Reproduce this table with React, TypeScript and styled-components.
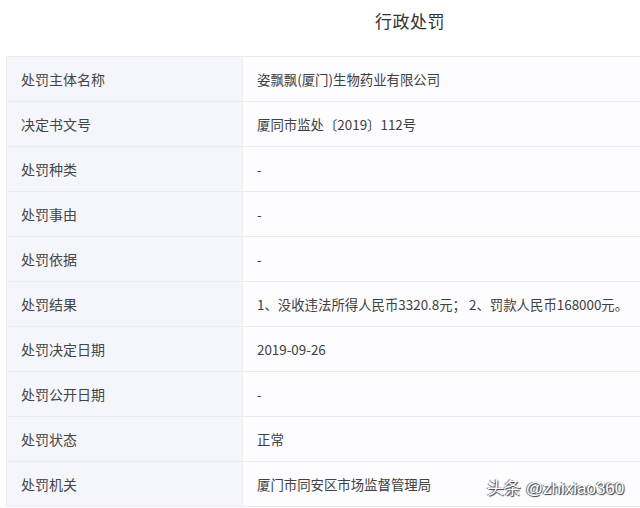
import styled, { createGlobalStyle } from "styled-components";

const Global = createGlobalStyle`
  html, body {
    margin: 0;
    padding: 0;
    background: #ffffff;
    overflow: hidden;
  }
  body {
    font-family: "Noto Sans CJK SC", "Noto Sans", sans-serif;
  }
`;

const Page = styled.div`
  position: relative;
  width: 640px;
  height: 508px;
  overflow: hidden;
`;

const Title = styled.div`
  height: 56px;
  box-sizing: border-box;
  padding: 8px 0 0 375px;
  font-size: 17px;
  line-height: 26px;
  color: #333333;
  letter-spacing: 0.5px;
`;

const Table = styled.div`
  margin-left: 6px;
  width: 660px;
  border-top: 1px solid #e9ebf1;
  border-left: 1px solid #e9ebf1;
`;

const Row = styled.div`
  display: grid;
  grid-template-columns: 236px 1fr;
  height: 45px;
  box-sizing: border-box;
  border-bottom: 1px solid #e9ebf1;
`;

const Label = styled.div`
  display: flex;
  align-items: center;
  padding-left: 14px;
  background: #f4f6fb;
  border-right: 1px solid #ebedf2;
  font-size: 14px;
  color: #454545;
`;

const Value = styled.div`
  display: flex;
  align-items: center;
  padding-left: 14px;
  background: #fdfcff;
  font-size: 13.4px;
  color: #404040;
  white-space: nowrap;
`;

const Watermark = styled.div`
  position: absolute;
  left: 487px;
  top: 474px;
  font-family: "Liberation Sans", "Noto Sans CJK SC", sans-serif;
  font-size: 17px;
  color: #ffffff;
  text-shadow: 1px 1px 1px #333, -1px 0 1px #555;
  white-space: nowrap;
`;

const rows: [string, string][] = [
  ["处罚主体名称", "姿飘飘(厦门)生物药业有限公司"],
  ["决定书文号", "厦同市监处〔2019〕112号"],
  ["处罚种类", "-"],
  ["处罚事由", "-"],
  ["处罚依据", "-"],
  ["处罚结果", "1、没收违法所得人民币3320.8元； 2、罚款人民币168000元。"],
  ["处罚决定日期", "2019-09-26"],
  ["处罚公开日期", "-"],
  ["处罚状态", "正常"],
  ["处罚机关", "厦门市同安区市场监督管理局"],
];

export default function App() {
  return (
    <Page>
      <Global />
      <Title>行政处罚</Title>
      <Table>
        {rows.map(([k, v]) => (
          <Row key={k}>
            <Label>{k}</Label>
            <Value>{v}</Value>
          </Row>
        ))}
      </Table>
      <Watermark>头条 @zhixiao360</Watermark>
    </Page>
  );
}
